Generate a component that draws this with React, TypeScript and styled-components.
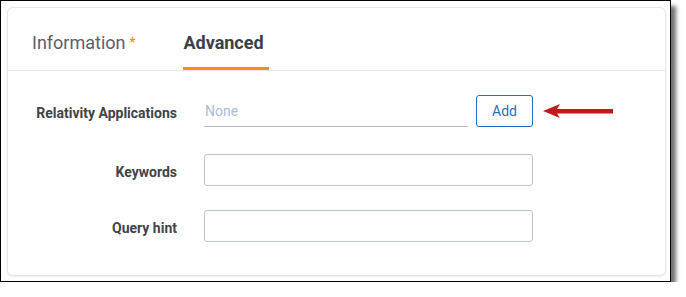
import React from 'react'
import styled, { createGlobalStyle } from 'styled-components'

const GlobalStyle = createGlobalStyle`
  html, body {
    margin: 0;
    padding: 0;
    background: #ffffff;
    font-family: Roboto, 'Liberation Sans', Arial, sans-serif;
  }
`

const Frame = styled.div`
  box-sizing: border-box;
  width: 671px;
  height: 282px;
  border: 1px solid #000;
  background: #fff;
  box-shadow: 5px 6px 4px rgba(0, 0, 0, 0.55);
  padding: 6px 4px 5px 6px;
`

const Card = styled.div`
  box-sizing: border-box;
  height: 100%;
  border: 1px solid #e4e6e9;
  border-radius: 6px;
  box-shadow: 0 1px 2px rgba(0, 0, 0, 0.08);
  background: #fff;
  display: flex;
  flex-direction: column;
`

const TabBar = styled.div`
  display: flex;
  padding-left: 24px;
  height: 62px;
  border-bottom: 1px solid #e3e9ef;
`

const Tab = styled.div<{ active?: boolean }>`
  box-sizing: border-box;
  height: 62px;
  display: flex;
  align-items: center;
  padding-top: 9px;
  margin-right: ${(p) => (p.active ? '0' : '48px')};
  padding-right: ${(p) => (p.active ? '5px' : '0')};
  font-size: 18px;
  font-weight: ${(p) => (p.active ? 700 : 400)};
  color: ${(p) => (p.active ? '#3b4047' : '#5b6067')};
  border-bottom: 3px solid ${(p) => (p.active ? '#f3901e' : 'transparent')};
  margin-bottom: -1px;
`

const Required = styled.span`
  color: #f3901e;
  font-size: 13px;
  font-weight: 700;
  margin-left: 4px;
  position: relative;
  top: -1px;
`

const Form = styled.div`
  display: flex;
  flex-direction: column;
  padding-top: 24px;
`

const Row = styled.div<{ gapBelow: number }>`
  display: flex;
  align-items: center;
  margin-bottom: ${(p) => p.gapBelow}px;
`

const Label = styled.div`
  width: 169px;
  text-align: right;
  font-size: 14px;
  font-weight: 700;
  color: #404449;
  padding-right: 27px;
  padding-top: 3px;
  white-space: nowrap;
`

const UnderlineInput = styled.div`
  box-sizing: border-box;
  width: 264px;
  height: 32px;
  border-bottom: 1px solid #bcbcbc;
  padding-left: 1px;
  display: flex;
  align-items: center;
  padding-bottom: 0px;
  font-size: 14px;
  color: #aabcd6;
`

const AddButton = styled.button`
  box-sizing: border-box;
  margin-left: 8px;
  width: 57px;
  height: 32px;
  border: 1px solid #1c72c6;
  border-radius: 3px;
  background: #fff;
  color: #1c72c6;
  font-family: Roboto, 'Liberation Sans', Arial, sans-serif;
  font-size: 14px;
  padding: 0;
`

const Arrow = styled.svg`
  margin-left: 10px;
`

const TextInput = styled.input`
  box-sizing: border-box;
  width: 329px;
  height: 32px;
  border: 1px solid #b3c5d9;
  border-radius: 3px;
  background: #fff;
  outline: none;
  font-family: Roboto, 'Liberation Sans', Arial, sans-serif;
  font-size: 14px;
  padding: 0 8px;
`

export default function App() {
  return (
    <>
      <GlobalStyle />
      <Frame>
        <Card>
          <TabBar>
            <Tab>
              Information<Required>*</Required>
            </Tab>
            <Tab active>Advanced</Tab>
          </TabBar>
          <Form>
            <Row gapBelow={27}>
              <Label>Relativity Applications</Label>
              <UnderlineInput>None</UnderlineInput>
              <AddButton>Add</AddButton>
              <Arrow width="70" height="14" viewBox="0 0 70 14">
                <polygon points="0,7 17,0 14,5 70,5 70,9.5 14,9.5 17,14" fill="#c5161c" />
              </Arrow>
            </Row>
            <Row gapBelow={24}>
              <Label>Keywords</Label>
              <TextInput />
            </Row>
            <Row gapBelow={0}>
              <Label>Query hint</Label>
              <TextInput />
            </Row>
          </Form>
        </Card>
      </Frame>
    </>
  )
}
